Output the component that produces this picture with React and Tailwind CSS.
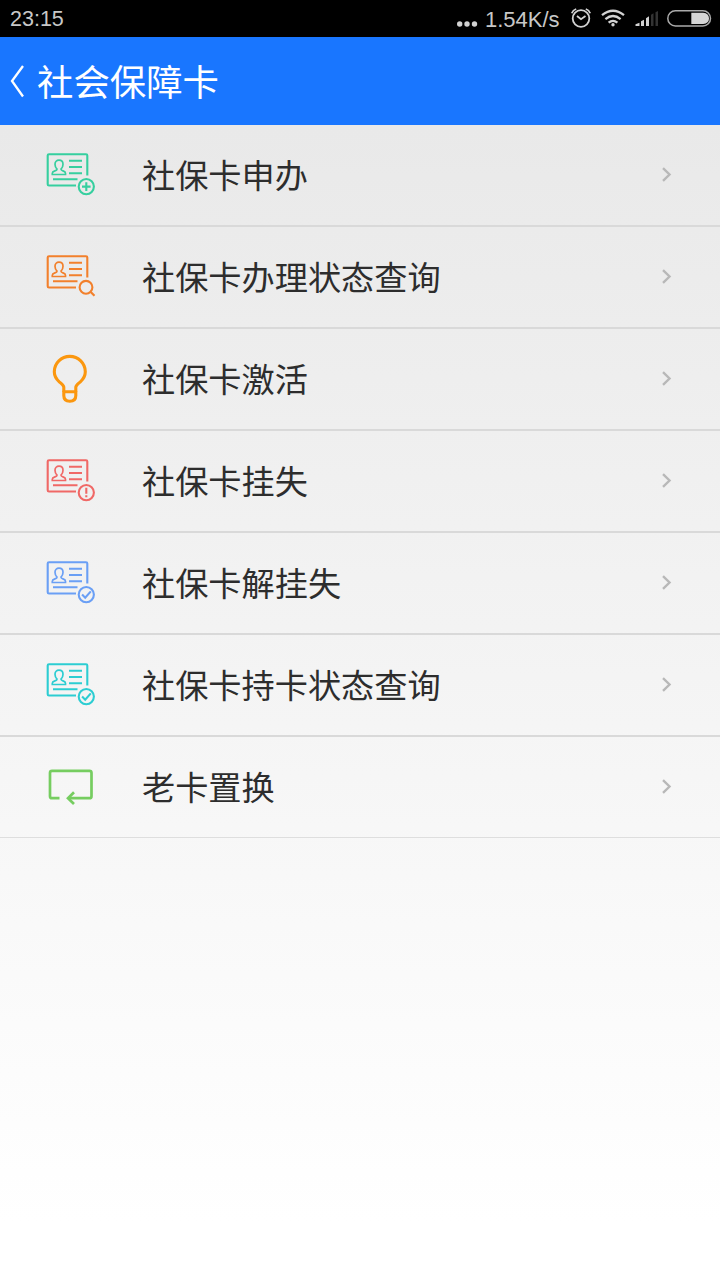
function CardBase() {
  return (
    <>
      <path d="M36 40.5H9Q7.7 40.5 7.7 39.2V10.6Q7.7 9.3 9 9.3H46Q47.3 9.3 47.3 10.6V30.5" />
      <path d="M29 15.7H42M29 22H42M29 28.2H42M13 34.3H37.5" />
      <path
        strokeWidth="1.7"
        d="M12.3 29.5V28.2C12.3 25.5 17 26.2 17 24.2C15.6 22.8 15 21 15 19.2C15 16.7 16.7 15.2 19 15.2S23 16.7 23 19.2C23 21 22.4 22.8 21 24.2C21 26.2 25.5 25.5 25.5 28.2V29.5Z"
      />
    </>
  );
}

const badges = {
  add: (
    <>
      <circle cx="46.3" cy="41.6" r="7.6" />
      <path d="M42 41.6H50.6M46.3 37.3V45.9" />
    </>
  ),
  search: (
    <>
      <circle cx="46" cy="40.3" r="6.4" />
      <path strokeWidth="2.2" d="M50.7 45L54.5 48.8" />
    </>
  ),
  alert: (
    <>
      <circle cx="46.3" cy="41.6" r="7.6" />
      <path d="M46.3 36.8V42.8M46.3 44.3V46.3" />
    </>
  ),
  check: (
    <>
      <circle cx="46.3" cy="41.6" r="7.6" />
      <path d="M42.1 41.6L45.2 44.7L50.8 38.4" />
    </>
  ),
};

function RowIcon({ kind, color }) {
  return (
    <svg
      className="h-[60px] w-[60px] shrink-0"
      viewBox="0 0 60 60"
      fill="none"
      stroke={color}
      strokeWidth="2.1"
    >
      {kind === "bulb" && (
        <g strokeWidth="3.1" strokeLinejoin="round">
          <path d="M23.8 43V38.3C23.8 36 21.5 34.7 19.3 32.8C16.2 30 14.3 26.7 14.3 22.7C14.3 14.2 21.3 7.4 29.8 7.4S45.3 14.2 45.3 22.7C45.3 26.7 43.4 30 40.3 32.8C38.1 34.7 35.8 36 35.8 38.3V43" />
          <path d="M23.8 42.8H35.8V46.5Q35.8 52.2 29.8 52.2T23.8 46.5Z" />
        </g>
      )}
      {kind === "swap" && (
        <g strokeWidth="2.7">
          <path d="M19.5 41.2H12Q10 41.2 10 39.2V15.8Q10 13.8 12 13.8H49.5Q51.5 13.8 51.5 15.8V39.2Q51.5 41.2 49.5 41.2H28.5" />
          <path d="M34 35.2L28 41.2L34 47" />
        </g>
      )}
      {badges[kind] && (
        <>
          <CardBase />
          {badges[kind]}
        </>
      )}
    </svg>
  );
}

const items = [
  { label: "社保卡申办", kind: "add", color: "#36cf9f" },
  { label: "社保卡办理状态查询", kind: "search", color: "#f2802c" },
  { label: "社保卡激活", kind: "bulb", color: "#fb970f" },
  { label: "社保卡挂失", kind: "alert", color: "#f06866" },
  { label: "社保卡解挂失", kind: "check", color: "#6a9ff5" },
  { label: "社保卡持卡状态查询", kind: "check", color: "#2ccdd2" },
  { label: "老卡置换", kind: "swap", color: "#76cd60" },
];

function StatusBar() {
  return (
    <div className="flex h-[37px] items-center justify-between bg-black pl-[10px] pr-[8px] font-['Liberation_Sans',Arial,sans-serif] text-[21.5px] leading-[37px] text-[#c8c8c8]">
      <span className="pt-[2px]">23:15</span>
      <div className="flex h-[37px] items-center">
        <svg className="mr-[7px] h-[37px] w-[22px]" viewBox="456 0 22 37" fill="#d2d2d2">
          <circle cx="459.7" cy="24" r="2.7" />
          <circle cx="467" cy="24" r="2.7" />
          <circle cx="474.5" cy="24" r="2.7" />
        </svg>
        <span className="w-[75px] whitespace-nowrap pt-px text-[22px]">1.54K/s</span>
        <svg className="h-[37px] w-[152px]" viewBox="560 0 152 37" fill="none" stroke="#d2d2d2">
          <circle cx="581" cy="18.5" r="8.3" strokeWidth="1.8" />
          <path strokeWidth="1.8" d="M577 16L581 19.2L585.5 16M571.8 13.2Q573 10 576.2 9M585.8 9Q589 10 590.2 13.2" />
          <g strokeWidth="2.3">
            <path d="M602 15.2Q613 6.2 624 15.2M605.4 19.2Q613 12.9 620.6 19.2M608.6 22.7Q613 19 617.4 22.7" />
          </g>
          <circle cx="613" cy="24.8" r="1.7" fill="#d2d2d2" stroke="none" />
          <g stroke="none" fill="#d2d2d2">
            <path d="M635.5 26V24.3L639.5 22.8V26ZM641 26V21.3L644 19.7V26ZM646 26V18.2L649 16.3V26Z" />
            <path fill="#333" d="M651 26V14.8L653.5 13.3V26ZM655.5 26V12.3L658 11V26Z" />
          </g>
          <rect x="667.8" y="10.8" width="42.7" height="15.2" rx="7.6" strokeWidth="1.5" stroke="#aaa" />
          <path fill="#d6d6d6" stroke="none" d="M691.3 12.8H703.2Q709 13.5 709 18.4T703.2 24H691.3Z" />
        </svg>
      </div>
    </div>
  );
}

export default function App() {
  return (
    <div className="flex h-[1280px] w-[720px] flex-col overflow-hidden bg-white font-['Noto_Sans_CJK_SC',sans-serif]">
      <StatusBar />
      <header className="flex h-[88px] shrink-0 items-center bg-[#1976ff] text-white">
        <svg className="h-[88px] w-[37px]" viewBox="0 0 37 88" fill="none" stroke="white" strokeWidth="2.3">
          <path d="M23 29L12 44L23 59.5" />
        </svg>
        <h1 className="pb-[2px] text-[36.4px] font-normal leading-[50px]">社会保障卡</h1>
      </header>
      <main className="flex-1 bg-linear-to-b from-[#e9e9e9] to-white to-95%">
        <ul>
          {items.map((item) => (
            <li
              key={item.label}
              className="flex h-[102px] items-start border-b-2 border-[#d9d9d9] pl-[40px] pr-[44px] last:h-[101px] last:border-b last:border-[#dedede]"
            >
              <div className="pt-5">
                <RowIcon kind={item.kind} color={item.color} />
              </div>
              <span className="ml-[42px] flex-1 pt-[25px] text-[33.2px] leading-[48px] text-[#2d2d2d]">
                {item.label}
              </span>
              <svg
                className="mt-[37px] h-6 w-6"
                viewBox="0 0 24 24"
                fill="none"
                stroke="#b8b8b8"
                strokeWidth="2.4"
              >
                <path d="M11 6.2L17.5 12.5L11 18.8" />
              </svg>
            </li>
          ))}
        </ul>
      </main>
    </div>
  );
}
